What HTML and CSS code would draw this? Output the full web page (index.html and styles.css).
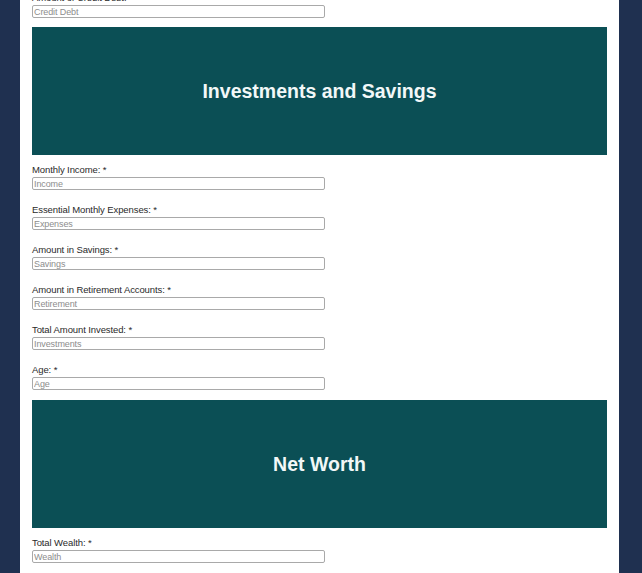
FILE: index.html
```html
<!DOCTYPE html>
<html lang="en">
<head>
  <meta charset="UTF-8" />
  <meta name="viewport" content="width=device-width, initial-scale=1.0" />
  <title>Financial Planner</title>
  <link rel="stylesheet" href="styles.css">
</head>
<body>
  <form class="planner">
    <div class="field">
      <label for="debt">Amount of Credit Debt: *</label>
      <input type="text" id="debt" placeholder="Credit Debt">
    </div>

    <div class="banner"><h2>Investments and Savings</h2></div>

    <div class="field">
      <label for="income">Monthly Income: *</label>
      <input type="text" id="income" placeholder="Income">
    </div>
    <div class="field">
      <label for="expenses">Essential Monthly Expenses: *</label>
      <input type="text" id="expenses" placeholder="Expenses">
    </div>
    <div class="field">
      <label for="savings">Amount in Savings: *</label>
      <input type="text" id="savings" placeholder="Savings">
    </div>
    <div class="field">
      <label for="retirement">Amount in Retirement Accounts: *</label>
      <input type="text" id="retirement" placeholder="Retirement">
    </div>
    <div class="field">
      <label for="invested">Total Amount Invested: *</label>
      <input type="text" id="invested" placeholder="Investments">
    </div>
    <div class="field">
      <label for="age">Age: *</label>
      <input type="text" id="age" placeholder="Age">
    </div>

    <div class="banner"><h2>Net Worth</h2></div>

    <div class="field">
      <label for="wealth">Total Wealth: *</label>
      <input type="text" id="wealth" placeholder="Wealth">
    </div>
  </form>
</body>
</html>
```

FILE: styles.css
```css
body {
  margin: 0;
  background: #1f3050;
  font-family: "Liberation Sans", Arial, sans-serif;
  overflow: hidden;
}
.planner {
  width: 575px;
  margin: -9px 0 0 20px;
  padding: 0 12px 40px;
  background: #fff;
}
.field {
  display: flex;
  flex-direction: column;
  align-items: flex-start;
}
.field + .field {
  margin-top: 13px;
}
.field label {
  font-size: 9.5px;
  line-height: 13px;
  letter-spacing: -0.1px;
  color: #2a2a2a;
  margin-bottom: 1px;
}
.field input {
  box-sizing: border-box;
  width: 293px;
  height: 13px;
  padding: 0 1px;
  border: 1px solid #a9a9a9;
  border-radius: 2px;
  font-family: "Liberation Sans", Arial, sans-serif;
  font-size: 9px;
  letter-spacing: -0.1px;
}
.field input::placeholder {
  color: #8d8d8d;
}
.banner {
  height: 128px;
  margin: 9px 0 8px;
  background: #0b4f55;
  display: flex;
  align-items: center;
  justify-content: center;
}
.field + .banner {
  margin-top: 10px;
}
.field:first-child + .banner {
  margin-top: 9px;
}
.banner h2 {
  margin: 0;
  color: #f2f8f8;
  font-size: 19.5px;
  font-weight: bold;
}
```
